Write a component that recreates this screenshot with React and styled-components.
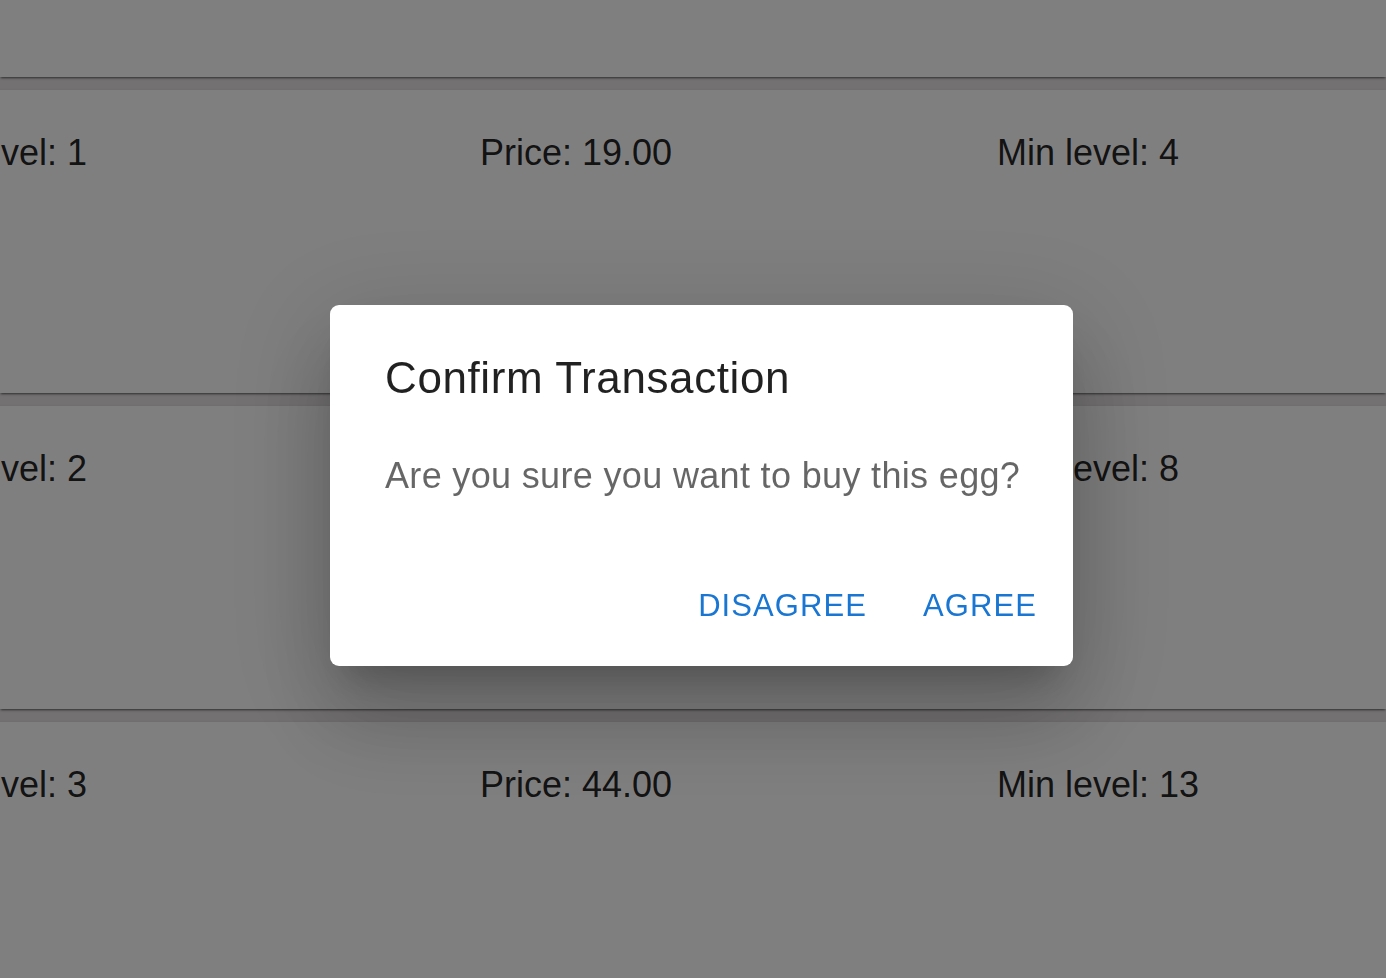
import React from "react";
import styled, { createGlobalStyle } from "styled-components";

const GlobalStyle = createGlobalStyle`
    html, body {
        margin: 0;
        padding: 0;
        overflow: hidden;
        background: #e6e2e2;
        font-family: "Liberation Sans", Arial, sans-serif;
    }
`;

// the list is scrolled a bit, so the first row and first column are cut off
const EggList = styled.div`
    margin-top: -226px;
`;

const EggRow = styled.div`
    height: 303px;
    margin-bottom: 13px;
    background: #fff;
    box-shadow: 0 2px 2px -1px rgba(0, 0, 0, 0.5), 0 1px 3px 0 rgba(0, 0, 0, 0.15);
    overflow: hidden;
`;

const RowTrack = styled.div`
    display: grid;
    grid-template-columns: 575px 517px 1fr;
    margin-left: -95px;
    padding-top: 36px;
`;

const Cell = styled.div`
    font-size: 36px;
    line-height: 54px;
    color: rgba(0, 0, 0, 0.87);
    white-space: nowrap;
`;

const Backdrop = styled.div`
    position: fixed;
    inset: 0;
    background: rgba(0, 0, 0, 0.5);
    display: flex;
    align-items: center;
    justify-content: center;
    padding: 0 0 8px 17px;
    box-sizing: border-box;
`;

const Dialog = styled.div`
    width: 743px;
    background: #fff;
    border-radius: 9px;
    box-shadow:
        0 25px 34px -16px rgba(0, 0, 0, 0.2),
        0 55px 87px 7px rgba(0, 0, 0, 0.14),
        0 21px 105px 18px rgba(0, 0, 0, 0.12);
    display: flex;
    flex-direction: column;
`;

const Title = styled.h2`
    margin: 0;
    padding: 37px 55px 0;
    font-size: 44px;
    line-height: 71px;
    font-weight: 400;
    letter-spacing: 0.6px;
    color: rgba(0, 0, 0, 0.87);
`;

const Content = styled.p`
    margin: 36px 0 0;
    padding: 0 40px 0 55px;
    font-size: 36px;
    line-height: 54px;
    letter-spacing: 0.00938em;
    white-space: nowrap;
    color: rgba(0, 0, 0, 0.6);
`;

const Actions = styled.div`
    display: flex;
    justify-content: flex-end;
    gap: 20px;
    margin-top: 44px;
    padding: 18px 18px 19px;
`;

const TextButton = styled.button`
    border: none;
    background: none;
    padding: 14px 18px;
    border-radius: 9px;
    font-family: "Liberation Sans", Arial, sans-serif;
    font-size: 31px;
    line-height: 54px;
    letter-spacing: 0.035em;
    text-transform: uppercase;
    color: #1976d2;
    cursor: pointer;
`;

const eggs = [
    { level: 0, price: "12.00", minLevel: 2 },
    { level: 1, price: "19.00", minLevel: 4 },
    { level: 2, price: "31.00", minLevel: 8 },
    { level: 3, price: "44.00", minLevel: 13 },
];

export default function App() {
    return (
        <>
            <GlobalStyle />
            <EggList>
                {eggs.map(egg => (
                    <EggRow key={egg.level}>
                        <RowTrack>
                            <Cell>Min level: {egg.level}</Cell>
                            <Cell>Price: {egg.price}</Cell>
                            <Cell>Min level: {egg.minLevel}</Cell>
                        </RowTrack>
                    </EggRow>
                ))}
            </EggList>
            <Backdrop>
                <Dialog>
                    <Title>Confirm Transaction</Title>
                    <Content>Are you sure you want to buy this egg?</Content>
                    <Actions>
                        <TextButton>Disagree</TextButton>
                        <TextButton>Agree</TextButton>
                    </Actions>
                </Dialog>
            </Backdrop>
        </>
    );
}
